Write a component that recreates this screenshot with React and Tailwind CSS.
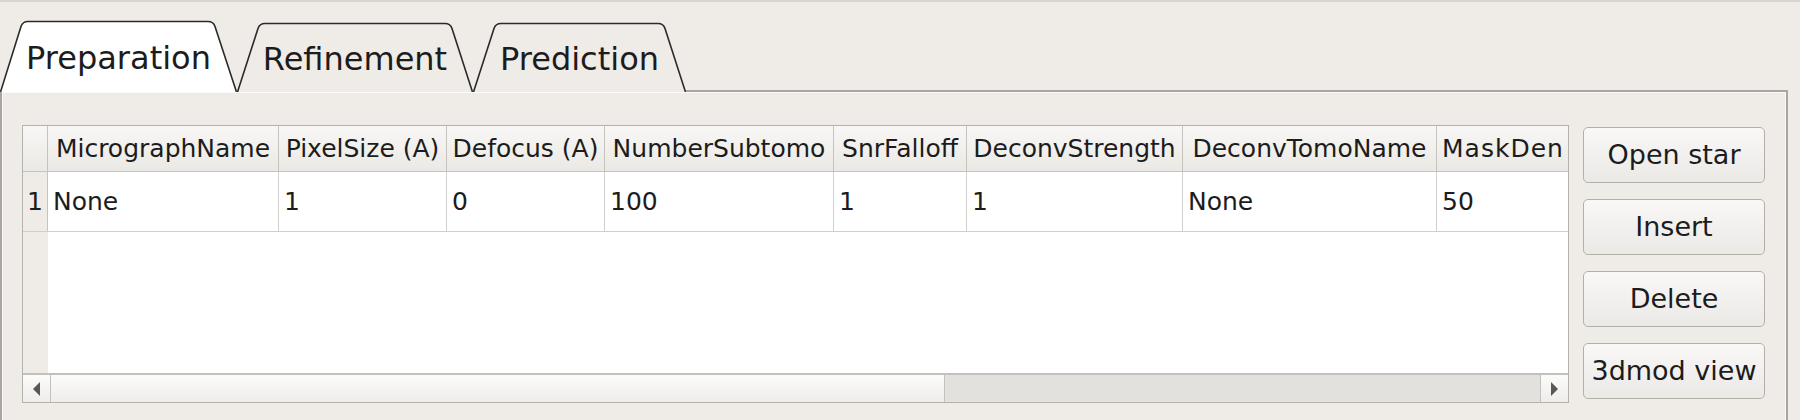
const columns = [
  { name: "MicrographName", value: "None", width: "w-[231px]" },
  { name: "PixelSize (A)", value: "1", width: "w-[168px]" },
  { name: "Defocus (A)", value: "0", width: "w-[158px]" },
  { name: "NumberSubtomo", value: "100", width: "w-[229px]" },
  { name: "SnrFalloff", value: "1", width: "w-[133px]" },
  { name: "DeconvStrength", value: "1", width: "w-[216px]" },
  { name: "DeconvTomoName", value: "None", width: "w-[254px]" },
];

const tabs = [
  {
    label: "Preparation",
    w: 237,
    box: "w-[237px]",
    text: "pt-[22px]",
    d: "M0.5 74 L21 8.5 Q22.6 3.5 28 3.5 L208 3.5 Q213.4 3.5 215 8.5 L236.5 74",
    selected: true,
  },
  {
    label: "Refinement",
    w: 236,
    box: "w-[236px]",
    text: "pt-[23px]",
    d: "M0.5 74 L21 10.5 Q22.6 5.5 28 5.5 L208 5.5 Q213.4 5.5 215 10.5 L235.5 74",
  },
  {
    label: "Prediction",
    w: 213,
    box: "w-[213px]",
    text: "pt-[23px]",
    d: "M0.5 74 L21 10.5 Q22.6 5.5 28 5.5 L185 5.5 Q190.4 5.5 192 10.5 L212.5 74",
  },
];

function Tab({ tab }) {
  return (
    <div className={`relative h-[74px] shrink-0 ${tab.box}`}>
      <svg className="absolute inset-0" width={tab.w} height="74" viewBox={`0 0 ${tab.w} 74`}>
        {tab.selected && <path d={tab.d + " Z"} fill="#ffffff" />}
        <path d={tab.d} fill="none" stroke="#2a2a2a" strokeWidth="1.6" />
      </svg>
      <div className={`relative text-center text-[32px] leading-[37px] ${tab.text}`}>{tab.label}</div>
    </div>
  );
}

function Arrow({ dir }) {
  return (
    <svg width="9" height="16" viewBox="0 0 9 16">
      {dir === "left" ? <path d="M1 8 L8 1 L8 15 Z" fill="#575757" /> : <path d="M8 8 L1 1 L1 15 Z" fill="#575757" />}
    </svg>
  );
}

function SideButton({ children }) {
  return (
    <button className="flex h-[56px] w-[182px] items-center justify-center rounded-[5px] border border-[#b3afa9] bg-linear-to-b from-[#f9f8f7] to-[#ebe9e6] text-[27px] text-[#1c1c1c]">
      {children}
    </button>
  );
}

export default function App() {
  return (
    <div className="h-[420px] w-[1800px] overflow-hidden border-t-2 border-[#d7d4cf] bg-[#efebe7] font-['DejaVu_Sans',sans-serif] text-[#1c1c1c]">
      <div className="mr-[12px] flex h-[90px] items-end">
        {tabs.map((t) => (
          <Tab key={t.label} tab={t} />
        ))}
        <div className="flex-1 border-b-2 border-[#a9a6a1]" />
      </div>

      <div className="mr-[12px] flex h-[328px] gap-[14px] border-x-2 border-[#a9a6a1] pt-[33px] pl-[20px] shadow-[inset_1px_1px_0_0_#fbfaf8,inset_-1px_0_0_0_#fbfaf8]">
        <div className="flex h-[278px] w-[1547px] shrink-0 flex-col overflow-hidden border border-[#b5b1ab] bg-white text-[25px]">
          <div className="flex h-[46px] shrink-0 border-b border-[#c6c2bd] bg-linear-to-b from-[#f8f7f5] to-[#ebe9e5]">
            <div className="w-[25px] shrink-0 border-r border-[#c6c2bd]" />
            {columns.map((c) => (
              <div
                key={c.name}
                className={`flex shrink-0 items-center justify-center overflow-hidden whitespace-nowrap border-r border-[#c6c2bd] ${c.width}`}
              >
                {c.name}
              </div>
            ))}
            <div className="flex min-w-0 flex-1 items-center whitespace-nowrap pl-[5px] tracking-[1px]">MaskDen</div>
          </div>

          <div className="flex h-[60px] shrink-0 border-b border-[#d2cec9]">
            <div className="flex w-[25px] shrink-0 items-center justify-center border-r border-[#c6c2bd] bg-[#efebe7]">1</div>
            {columns.map((c) => (
              <div
                key={c.name}
                className={`flex shrink-0 items-center overflow-hidden whitespace-nowrap border-r border-[#d2cec9] pl-[5px] ${c.width}`}
              >
                {c.value}
              </div>
            ))}
            <div className="flex min-w-0 flex-1 items-center pl-[5px]">50</div>
          </div>

          <div className="flex flex-1">
            <div className="w-[25px] shrink-0 bg-[#efebe7]" />
            <div className="flex-1" />
          </div>

          <div className="flex h-[29px] shrink-0 border-t-2 border-[#c4c0bb]">
            <div className="flex w-[28px] shrink-0 items-center justify-center border-r border-[#c4c0bb] bg-linear-to-b from-[#fbfbfa] to-[#efedea]">
              <Arrow dir="left" />
            </div>
            <div className="w-[894px] shrink-0 border-r border-[#c4c0bb] bg-linear-to-b from-[#fbfbfa] to-[#efedea]" />
            <div className="flex-1 bg-[#e3e1dd]" />
            <div className="flex w-[28px] shrink-0 items-center justify-center border-l border-[#c4c0bb] bg-linear-to-b from-[#fbfbfa] to-[#efedea]">
              <Arrow dir="right" />
            </div>
          </div>
        </div>

        <div className="flex flex-col gap-[16px] pt-[2px]">
          <SideButton>Open star</SideButton>
          <SideButton>Insert</SideButton>
          <SideButton>Delete</SideButton>
          <SideButton>3dmod view</SideButton>
        </div>
      </div>
    </div>
  );
}
